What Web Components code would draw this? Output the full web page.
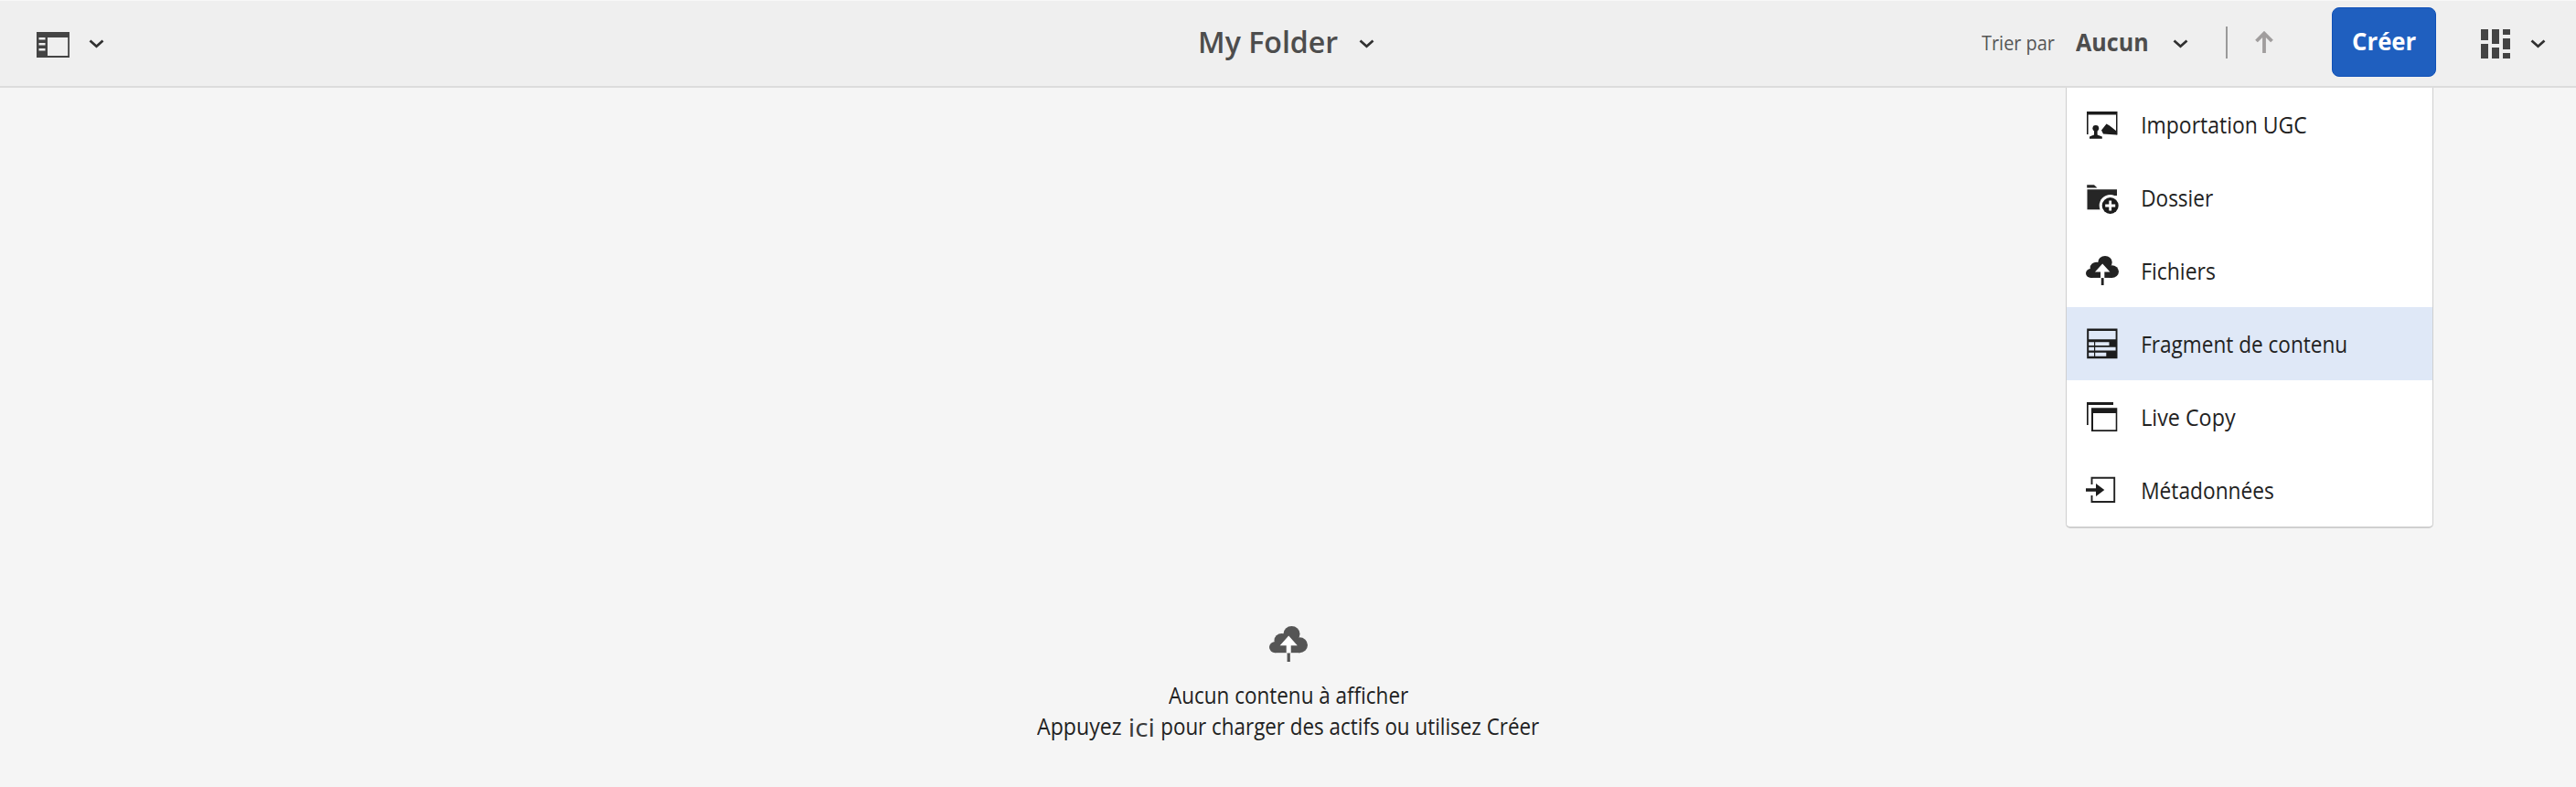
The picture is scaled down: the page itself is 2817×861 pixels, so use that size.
<!DOCTYPE html>
<html lang="fr">
<head>
<meta charset="utf-8">
<title>My Folder</title>
<style>
body{margin:0;background:#f5f5f5;font-family:"Open Sans","Noto Sans",sans-serif;color:#222}
</style>
</head>
<body>
<assets-page></assets-page>
<script>
const define=(name,html,setup)=>customElements.define(name,class extends HTMLElement{
  connectedCallback(){
    if(this.shadowRoot)return;
    const t=document.createElement('template');
    t.innerHTML=html;
    this.attachShadow({mode:'open'}).append(t.content.cloneNode(true));
    if(setup)setup(this,this.shadowRoot);
  }
});

// Label whose glyphs are condensed to a given ink width.
const ctx=document.createElement('canvas').getContext('2d');
define('fit-text',`<style>
:host{display:block;flex:none;white-space:nowrap}
span{display:inline-block;transform-origin:0 50%}
</style><span><slot></slot></span>`,(el,root)=>{
  const w=+el.getAttribute('w'),cs=getComputedStyle(el);
  ctx.font=`${cs.fontWeight} ${cs.fontSize} ${cs.fontFamily}`;
  const m=ctx.measureText(el.textContent.trim());
  const s=w/(m.actualBoundingBoxLeft+m.actualBoundingBoxRight);
  el.style.width=w+'px';
  root.querySelector('span').style.transform=`translateX(${m.actualBoundingBoxLeft*s}px) scaleX(${s})`;
});

const cloud=`<g fill="currentColor"><circle cx="6" cy="22.8" r="6"/><circle cx="12.5" cy="15.5" r="7.5"/><circle cx="22.5" cy="8.3" r="8.3"/><circle cx="30.3" cy="20.5" r="8.3"/><path d="M6 15H31V28.8H6Z"/><path d="M18 29H21V38.5H18Z"/></g><path d="M19.5 10.3L28.3 21H21.8V28.8H17.2V21H10.7Z" fill="#fff"/>`;
const icons={
 rail:['0 0 36 28',`<path fill="#444" fill-rule="evenodd" d="M0 0H36V28H0ZM12 6V26H34.2V6ZM2.5 6V8.5H9.5V6ZM2.5 12V14.5H9.5V12ZM2.5 18V20.5H9.5V18Z"/>`],
 chevron:['0 0 17 10',`<path d="M1.5 1.5L8.5 7.8L15.5 1.5" fill="none" stroke="#303030" stroke-width="2.7"/>`],
 arrow:['0 0 20 25',`<path d="M10 24V3M1.5 11L10 2.5L18.5 11" fill="none" stroke="#a09d9d" stroke-width="3.8"/>`],
 grid:['0 0 32 32',`<path fill="#444" d="M0 0H8V12H0ZM0 16H8V32H0ZM12 0H20V16H12ZM12 20H20V32H12ZM24 0H32V6H24ZM24 10H32V22H24ZM24 26H32V32H24Z"/>`],
 cloud:['0 0 38.6 38.5',cloud],
 ugc:['0 0 40 80',`<path d="M2 26H35.5V51.5H34V29.5H3.6V51H2Z"/><circle cx="11.8" cy="44.3" r="3.4"/><path d="M10 46H13.6V51.5L18.8 53.5V55.8H5V53.5L10 51.5ZM18 46.5L23.5 39.5L27 41.5L34.5 47.5V51.5L20 50.6Z"/>`],
 folder:['0 0 40 80',`<path d="M2.2 26.3H10L13.5 29.4H2.2ZM2.5 31.3H35V38H30V53.3H2.5Z" fill="#262626"/><circle cx="27.7" cy="49" r="12" fill="#fff"/><circle cx="27.7" cy="49" r="9"/><path d="M27.7 43.5V54.5M22.2 49H33.2" stroke="#fff" stroke-width="2.8"/>`],
 upload:['0 0 40 80',`<g transform="translate(1 24) scale(.933 .831)">${cloud}</g>`],
 fragment:['0 0 40 80',`<path fill-rule="evenodd" d="M2.2 23.4H35.5V56.3H2.2ZM4.2 26V35.3H33.6V26ZM4.2 38.3V42H26.5V38.3ZM4.2 43.8V47.4H33.6V43.8ZM4.2 49.7V53.8H23.3V49.7Z"/><path d="M10 37H11.2V55H10Z"/>`],
 live:['0 0 40 80',`<path fill-rule="evenodd" d="M2 24H31V27H3.7V49H2ZM7 30.3H35.3V56H7ZM9 36V54.3H33.7V36Z"/>`],
 meta:['0 0 40 80',`<path d="M7.5 34V26.8H32.2V53H7.5V46" fill="none" stroke="#222" stroke-width="1.9"/><path d="M1 38.2H12V33L21.3 40L12 47V41.7H1Z"/>`]
};
define('ui-icon',`<style>:host{display:block;flex:none;color:#222}svg{display:block;width:100%;height:100%;fill:#1c1c1c}</style>`,(el,root)=>{
  const [box,body]=icons[el.getAttribute('name')];
  root.innerHTML+=`<svg viewBox="${box}" preserveAspectRatio="none">${body}</svg>`;
});

define('menu-item',`<style>
:host{display:flex;height:80px;padding-left:20px;gap:22.5px;font-size:25px;line-height:80px;color:#222}
:host([selected]){background:#dfe8f7}
ui-icon{width:40px;height:80px}
</style><slot></slot>`,(el,root)=>{
  const icon=document.createElement('ui-icon');
  icon.setAttribute('name',el.getAttribute('icon'));
  root.querySelector('slot').before(icon);
});

define('create-menu',`<style>
:host{display:block;box-sizing:border-box;width:402px;background:#fff;border:solid #cfcfcf;border-width:0 1px 2px;border-radius:0 0 5px 5px}
</style>
<menu-item icon="ugc"><fit-text w="179">Importation UGC</fit-text></menu-item>
<menu-item icon="folder"><fit-text w="77">Dossier</fit-text></menu-item>
<menu-item icon="upload"><fit-text w="79">Fichiers</fit-text></menu-item>
<menu-item icon="fragment" selected><fit-text w="223">Fragment de contenu</fit-text></menu-item>
<menu-item icon="live"><fit-text w="102">Live Copy</fit-text></menu-item>
<menu-item icon="meta"><fit-text w="143">Métadonnées</fit-text></menu-item>`);

define('action-bar',`<style>
:host{display:grid;grid-template-columns:1313px 1fr auto;box-sizing:border-box;height:96px;background:#efefef;border-top:1px solid #f8f8f8;border-bottom:2px solid #dcdcdc;color:#4d4d4d}
div{display:flex;align-items:center}
fit-text{padding-bottom:4px}
ui-icon[name=chevron]{width:17px;height:10px;padding-top:1px}
.left{padding-left:40px;gap:21px}
.left ui-icon[name=rail]{width:36px;height:28px;padding-top:2px}
.mid{gap:23px;font-size:33px;font-weight:600}
.right{padding-right:33px}
.sort{font-size:22px;margin-right:23px;color:#555}
.val{font-size:27px;font-weight:700;margin-right:28px}
.rule{width:2px;height:35px;background:#999;margin:0 30px 3px 41px}
.right ui-icon[name=arrow]{width:20px;height:25px;margin-right:64px;padding-bottom:2px}
button{display:flex;box-sizing:border-box;align-items:center;justify-content:center;width:114px;height:76px;margin:0 49px 4px 0;padding:0;border:1px solid #0f50b8;border-radius:8px;background:#1f5fbf;color:#fff;font:700 27px/38px "Open Sans","Noto Sans",sans-serif}
button fit-text{padding-bottom:1px}
.right ui-icon[name=grid]{width:32px;height:32px;margin-right:22px;padding-top:1px}
</style>
<div class="left"><ui-icon name="rail"></ui-icon><ui-icon name="chevron"></ui-icon></div>
<div class="mid"><fit-text w="150">My Folder</fit-text><ui-icon name="chevron"></ui-icon></div>
<div class="right"><fit-text class="sort" w="80">Trier par</fit-text><fit-text class="val" w="78">Aucun</fit-text><ui-icon name="chevron"></ui-icon><span class="rule"></span><ui-icon name="arrow"></ui-icon><button><fit-text w="69">Créer</fit-text></button><ui-icon name="grid"></ui-icon><ui-icon name="chevron"></ui-icon></div>`);

define('empty-state',`<style>
:host{display:flex;flex-direction:column;align-items:center;padding-top:589px;font-size:25px;line-height:34px;color:#222}
ui-icon{width:42px;height:39px;color:#555;margin-bottom:19px}
div{display:flex;gap:10px}
.link{font-size:27px;color:#3a3a3a;padding-top:2px}
</style>
<ui-icon name="cloud"></ui-icon>
<fit-text w="262">Aucun contenu à afficher</fit-text>
<div><fit-text w="92">Appuyez</fit-text><fit-text class="link" w="25">ici</fit-text><fit-text w="412">pour charger des actifs ou utilisez Créer</fit-text></div>`);

define('assets-page',`<style>
:host{display:block;position:relative;height:861px;overflow:hidden}
create-menu{position:absolute;top:96px;right:156px}
</style><action-bar></action-bar><empty-state></empty-state><create-menu></create-menu>`);
</script>
</body>
</html>
